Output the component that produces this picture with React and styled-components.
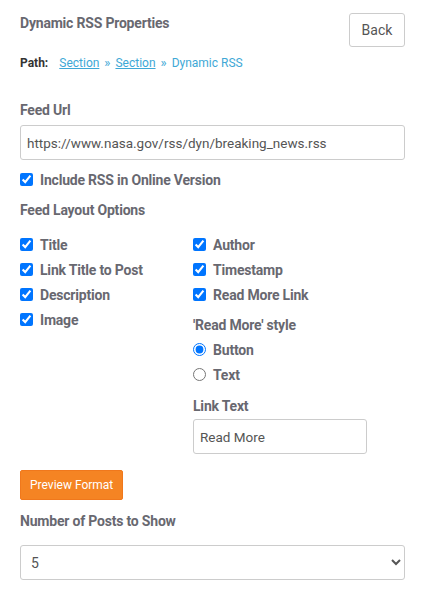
import React from "react"
import styled, { createGlobalStyle } from "styled-components"

const GlobalStyle = createGlobalStyle`
  body {
    margin: 0;
    background: #fff;
    font-family: Roboto, "Liberation Sans", sans-serif;
    color: #686870;
  }
`

const Page = styled.div`
  width: 425px;
  padding: 13px 20px 20px;
  box-sizing: border-box;
`

const Header = styled.div`
  display: flex;
  justify-content: space-between;
  align-items: flex-start;
`

const Title = styled.h1`
  margin: 2px 0 0;
  font-size: 14px;
  font-weight: 700;
  letter-spacing: -0.2px;
  color: #686870;
`

const BackButton = styled.button`
  width: 56px;
  height: 34px;
  border: 1px solid #ccc;
  border-radius: 3px;
  background: #fff;
  font-family: inherit;
  font-size: 14px;
  color: #555;
  cursor: pointer;
`

const PathRow = styled.div`
  display: flex;
  align-items: center;
  gap: 5px;
  margin-top: 8px;
  font-size: 12px;
`

const PathLabel = styled.span`
  font-weight: 700;
  color: #333;
  margin-right: 6px;
`

const Crumb = styled.a`
  color: #3ea8d6;
  text-decoration: ${({ $current }) => ($current ? "none" : "underline")};
`

const Sep = styled.span`
  color: #3ea8d6;
  font-size: 13px;
`

const Label = styled.div`
  font-size: 14px;
  font-weight: 700;
  letter-spacing: -0.2px;
  color: #686870;
  margin: ${({ $top }) => $top || "0"} 0 ${({ $bottom }) => $bottom || "0"};
`

const TextInput = styled.input`
  display: block;
  box-sizing: border-box;
  width: ${({ $width }) => $width || "100%"};
  height: 35px;
  border: 1px solid #ccc;
  border-radius: 3px;
  padding: 0 6px;
  font-family: inherit;
  font-size: 13.5px;
  color: #555;
  outline: none;
`

const Check = styled.label`
  display: flex;
  align-items: center;
  gap: 7px;
  height: 25px;
  font-size: 14px;
  font-weight: 700;
  letter-spacing: -0.2px;
  color: #686870;
  margin-top: ${({ $top }) => $top || "0"};
  input {
    margin: 0;
    width: 13px;
    height: 13px;
  }
`

const Columns = styled.div`
  display: grid;
  grid-template-columns: 173px 1fr;
  margin-top: 14px;
`

const Column = styled.div`
  display: flex;
  flex-direction: column;
`

const OrangeButton = styled.button`
  margin-top: 16px;
  height: 30px;
  padding: 0 9px;
  border: 1px solid #f0781c;
  border-radius: 2px;
  background: #f58423;
  color: #fff;
  font-family: inherit;
  font-size: 12px;
`

const Select = styled.select`
  display: block;
  width: 100%;
  height: 35px;
  margin-top: 16px;
  border: 1px solid #ccc;
  border-radius: 3px;
  padding: 0 6px;
  background: #fff;
  font-family: inherit;
  font-size: 14px;
  color: #555;
`

const layoutLeft = ["Title", "Link Title to Post", "Description", "Image"]
const layoutRight = ["Author", "Timestamp", "Read More Link"]

export default function App() {
  return (
    <Page>
      <GlobalStyle />
      <Header>
        <Title>Dynamic RSS Properties</Title>
        <BackButton>Back</BackButton>
      </Header>
      <PathRow>
        <PathLabel>Path:</PathLabel>
        <Crumb href="#">Section</Crumb>
        <Sep>»</Sep>
        <Crumb href="#">Section</Crumb>
        <Sep>»</Sep>
        <Crumb $current>Dynamic RSS</Crumb>
      </PathRow>

      <Label $top="32px" $bottom="7px">Feed Url</Label>
      <TextInput defaultValue="https://www.nasa.gov/rss/dyn/breaking_news.rss" />
      <Check $top="7px">
        <input type="checkbox" defaultChecked />
        Include RSS in Online Version
      </Check>
      <Label $top="10px">Feed Layout Options</Label>

      <Columns>
        <Column>
          {layoutLeft.map((t) => (
            <Check key={t}>
              <input type="checkbox" defaultChecked />
              {t}
            </Check>
          ))}
        </Column>
        <Column>
          {layoutRight.map((t) => (
            <Check key={t}>
              <input type="checkbox" defaultChecked />
              {t}
            </Check>
          ))}
          <Label $top="10px" $bottom="4px">'Read More' style</Label>
          <Check>
            <input type="radio" name="style" defaultChecked />
            Button
          </Check>
          <Check>
            <input type="radio" name="style" />
            Text
          </Check>
          <Label $top="11px" $bottom="5px">Link Text</Label>
          <TextInput $width="174px" defaultValue="Read More" />
        </Column>
      </Columns>

      <OrangeButton>Preview Format</OrangeButton>
      <Label $top="13px">Number of Posts to Show</Label>
      <Select defaultValue="5">
        <option>5</option>
        <option>10</option>
        <option>15</option>
      </Select>
    </Page>
  )
}
